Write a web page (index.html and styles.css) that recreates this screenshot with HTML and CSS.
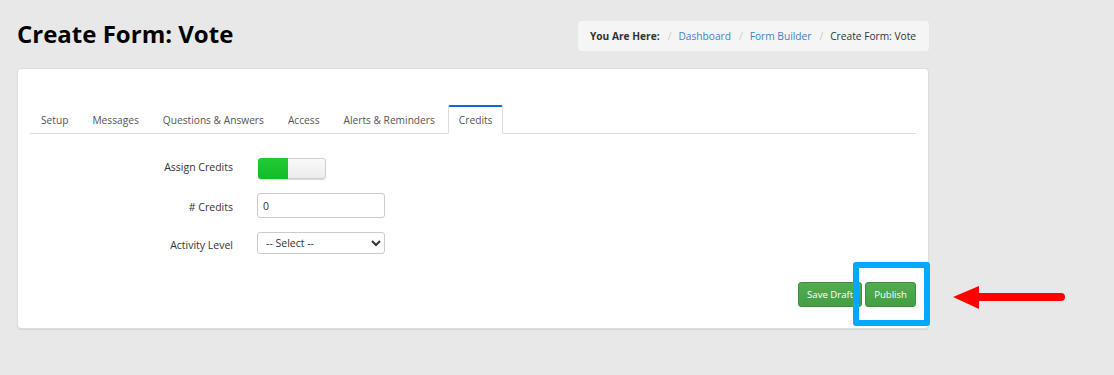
FILE: index.html
```html
<!DOCTYPE html>
<html lang="en">
<head>
    <meta charset="UTF-8">
    <meta name="viewport" content="width=device-width, initial-scale=1.0">
    <title>Create Form: Vote</title>
    <link rel="stylesheet" href="styles.css">
</head>
<body>
    <div class="page">
        <div class="page-header">
            <h1>Create Form: Vote</h1>
            <ol class="breadcrumb">
                <li class="crumb-label">You Are Here:</li>
                <li><a href="#">Dashboard</a></li>
                <li><a href="#">Form Builder</a></li>
                <li class="current">Create Form: Vote</li>
            </ol>
        </div>

        <div class="panel">
            <ul class="nav-tabs">
                <li><a href="#">Setup</a></li>
                <li><a href="#">Messages</a></li>
                <li><a href="#">Questions &amp; Answers</a></li>
                <li><a href="#">Access</a></li>
                <li><a href="#">Alerts &amp; Reminders</a></li>
                <li class="active"><a href="#">Credits</a></li>
            </ul>

            <div class="form-grid">
                <label class="form-label form-label-top">Assign Credits</label>
                <div class="toggle">
                    <span class="toggle-on"></span>
                    <span class="toggle-off"></span>
                </div>

                <label class="form-label" for="credits"># Credits</label>
                <input id="credits" class="form-control" type="text" value="0">

                <label class="form-label" for="level">Activity Level</label>
                <select id="level" class="form-control select">
                    <option>-- Select --</option>
                </select>
            </div>

            <div class="actions">
                <button class="btn">Save Draft</button>
                <button class="btn">Publish</button>
            </div>
        </div>

        <!-- annotation drawn over the screenshot -->
        <div class="highlight"></div>
        <svg class="arrow" width="120" height="30" viewBox="0 0 120 30">
            <line x1="26" y1="14" x2="111" y2="14" stroke="#ff0000" stroke-width="8" stroke-linecap="round"/>
            <polygon points="3,14 29,3 29,26" fill="#ff0000"/>
        </svg>
    </div>
</body>
</html>
```

FILE: styles.css
```css
body {
    margin: 0;
    background-color: #e8e8e8;
    font-family: 'Open Sans', 'Liberation Sans', sans-serif;
    font-size: 10.5px;
    color: #333333;
}
.page {
    position: relative;
    width: 1114px;
    height: 375px;
    padding: 20px 0 0 17px;
    box-sizing: border-box;
}
.page-header {
    display: flex;
    justify-content: space-between;
    align-items: flex-start;
    width: 912px;
    margin-bottom: 17px;
}
.page-header h1 {
    margin: 0;
    font-size: 24px;
    line-height: 28px;
    font-weight: 700;
    color: #000000;
}
.breadcrumb {
    display: flex;
    align-items: center;
    height: 30px;
    margin: 1px 0 0;
    padding: 0 13px 0 12px;
    list-style: none;
    background-color: #f5f5f5;
    border-radius: 4px;
    font-size: 10.2px;
}
.breadcrumb li + li::before {
    content: '/';
    color: #cccccc;
    padding: 0 7px 0 8px;
}
.breadcrumb .crumb-label {
    font-weight: 700;
}
.breadcrumb a {
    color: #3f80cc;
    text-decoration: none;
}
.panel {
    width: 912px;
    box-sizing: border-box;
    background-color: #ffffff;
    border: 1px solid #dddddd;
    border-radius: 4px;
    box-shadow: 0 1px 1px rgba(0, 0, 0, 0.08);
    padding: 36px 12px 21px;
}
.nav-tabs {
    display: flex;
    margin: 0;
    padding: 0;
    list-style: none;
    border-bottom: 1px solid #dddddd;
    font-size: 10.2px;
}
.nav-tabs li {
    margin: 0 2px -1px 0;
}
.nav-tabs a {
    display: block;
    padding: 5px 10px 4px;
    line-height: 17px;
    color: #555555;
    text-decoration: none;
    border: 1px solid transparent;
    border-top-width: 2px;
    border-radius: 2px 2px 0 0;
}
.nav-tabs .active a {
    border-color: #dddddd;
    border-top-color: #0b6ccf;
    border-bottom-color: #ffffff;
    background-color: #ffffff;
}
.form-grid {
    display: grid;
    grid-template-columns: 203px 128px;
    column-gap: 24px;
    row-gap: 14px;
    align-items: center;
    margin-top: 24px;
}
.form-label {
    text-align: right;
    padding-top: 3px;
    color: #333333;
}
.form-label-top {
    padding-top: 0;
    margin-top: -3px;
}
.toggle {
    display: flex;
    width: 68px;
    height: 21px;
    margin-left: 1px;
    border-radius: 3px;
    overflow: hidden;
    box-shadow: 0 1px 1px rgba(0, 0, 0, 0.15);
}
.toggle-on {
    width: 30px;
    background: linear-gradient(#22cc36, #13bb26);
}
.toggle-off {
    flex: 1;
    background: linear-gradient(#fafafa, #ececec);
    border: 1px solid #cfcfcf;
    border-left: none;
    border-radius: 0 3px 3px 0;
}
.form-control {
    width: 128px;
    height: 25px;
    box-sizing: border-box;
    margin: 0;
    padding: 0 5px;
    border: 1px solid #cccccc;
    border-radius: 3px;
    background-color: #ffffff;
    font-family: inherit;
    font-size: 10.5px;
    color: #333333;
}
.select {
    height: 22px;
    padding: 0 4px;
}
.actions {
    display: flex;
    justify-content: flex-end;
    gap: 3px;
    margin-top: 28px;
}
.btn {
    height: 25px;
    padding: 0 8px;
    border: 1px solid #3e8f3e;
    border-radius: 3px;
    background: linear-gradient(#51ad51, #449f44);
    color: #ffffff;
    font-family: inherit;
    font-size: 9.6px;
}
.highlight {
    position: absolute;
    left: 853px;
    top: 262px;
    width: 77px;
    height: 64px;
    box-sizing: border-box;
    border: 6px solid #00a9ff;
    border-radius: 3px;
}
.arrow {
    position: absolute;
    left: 950px;
    top: 283px;
}
```
